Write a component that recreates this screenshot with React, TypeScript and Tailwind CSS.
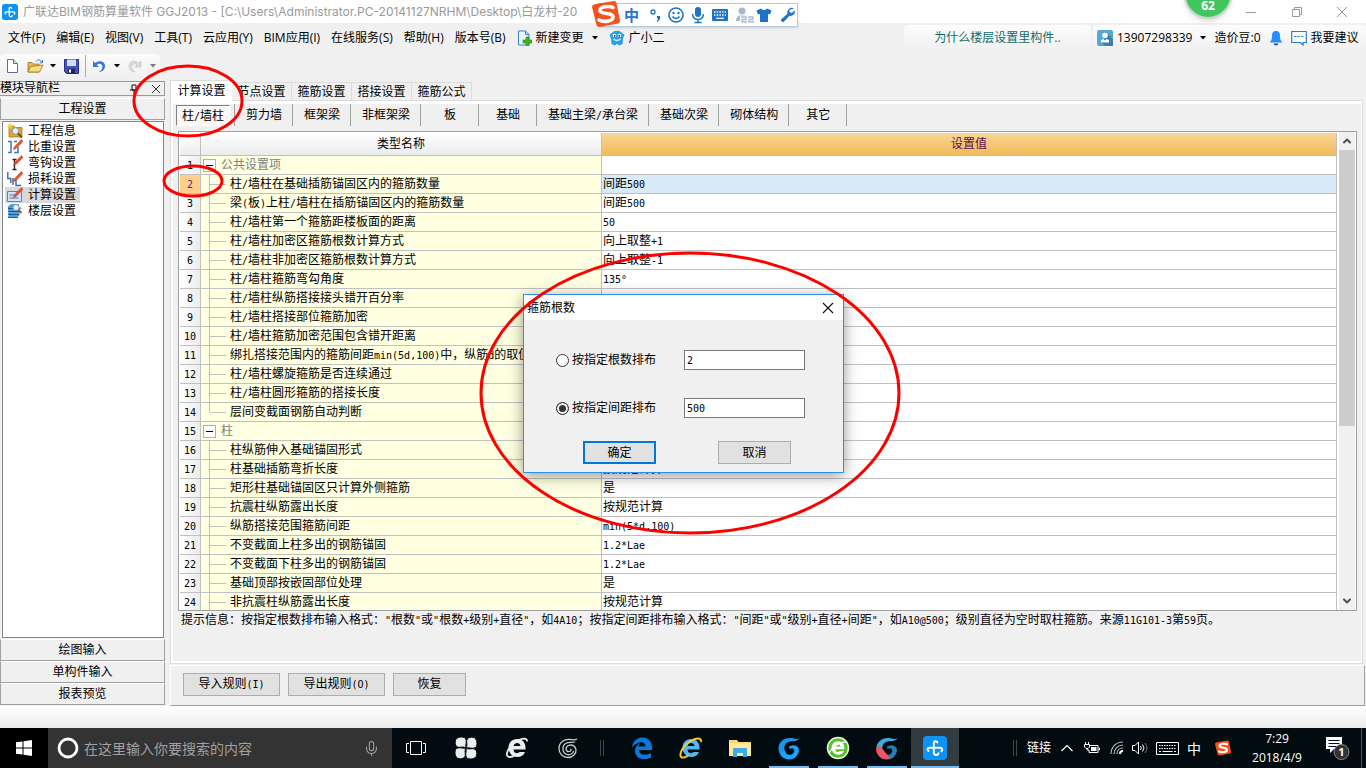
import React, { useState } from 'react';
import { clsx } from 'clsx';
import { ChevronUp, Mic } from 'lucide-react';

const SONG = "[font-family:'DejaVu_Sans_Mono','Noto_Sans_CJK_SC',monospace]";
const YAHEI = "[font-family:'Open_Sans','Noto_Sans_CJK_SC',sans-serif]";

const MENUS = ['文件(F)', '编辑(E)', '视图(V)', '工具(T)', '云应用(Y)', 'BIM应用(I)', '在线服务(S)', '帮助(H)', '版本号(B)'];
const TABS = ['计算设置', '节点设置', '箍筋设置', '搭接设置', '箍筋公式'];
const MEMBERS = ['剪力墙', '框架梁', '非框架梁', '板', '基础', '基础主梁/承台梁', '基础次梁', '砌体结构', '其它'];

interface Row {
  name: string;
  value?: string;
  group?: boolean;
  last?: boolean;
}

const ROWS: Row[] = [
  { name: '公共设置项', group: true },
  { name: '柱/墙柱在基础插筋锚固区内的箍筋数量', value: '间距500' },
  { name: '梁(板)上柱/墙柱在插筋锚固区内的箍筋数量', value: '间距500' },
  { name: '柱/墙柱第一个箍筋距楼板面的距离', value: '50' },
  { name: '柱/墙柱加密区箍筋根数计算方式', value: '向上取整+1' },
  { name: '柱/墙柱非加密区箍筋根数计算方式', value: '向上取整-1' },
  { name: '柱/墙柱箍筋弯勾角度', value: '135°' },
  { name: '柱/墙柱纵筋搭接接头错开百分率' },
  { name: '柱/墙柱搭接部位箍筋加密' },
  { name: '柱/墙柱箍筋加密范围包含错开距离' },
  { name: '绑扎搭接范围内的箍筋间距min(5d,100)中，纵筋d的取值' },
  { name: '柱/墙柱螺旋箍筋是否连续通过' },
  { name: '柱/墙柱圆形箍筋的搭接长度' },
  { name: '层间变截面钢筋自动判断', last: true },
  { name: '柱', group: true },
  { name: '柱纵筋伸入基础锚固形式' },
  { name: '柱基础插筋弯折长度', value: '按规范计算' },
  { name: '矩形柱基础锚固区只计算外侧箍筋', value: '是' },
  { name: '抗震柱纵筋露出长度', value: '按规范计算' },
  { name: '纵筋搭接范围箍筋间距', value: 'min(5*d,100)' },
  { name: '不变截面上柱多出的钢筋锚固', value: '1.2*Lae' },
  { name: '不变截面下柱多出的钢筋锚固', value: '1.2*Lae' },
  { name: '基础顶部按嵌固部位处理', value: '是' },
  { name: '非抗震柱纵筋露出长度', value: '按规范计算' },
];

const HINT =
  '提示信息：按指定根数排布输入格式："根数"或"根数+级别+直径"，如4A10；按指定间距排布输入格式："间距"或"级别+直径+间距"，如A10@500；级别直径为空时取柱箍筋。来源11G101-3第59页。';

// Half-width characters take half the width of a Chinese character
function Song({ text }: { text: string }) {
  return (
    <>
      {text.split(/([\x20-\x7e°]+)/).map((part, i) =>
        i % 2 ? (
          <span key={i} className="text-[10px]">{part}</span>
        ) : (
          part
        )
      )}
    </>
  );
}

function Caret({ className }: { className?: string }) {
  return (
    <svg viewBox="0 0 6 4" className={clsx('h-[4px] w-[6px] shrink-0', className)}>
      <path d="M0 0h6L3 3.5z" fill="currentColor" />
    </svg>
  );
}

function AppLogo({ className }: { className: string }) {
  return (
    <svg viewBox="0 0 24 24" className={className}>
      <rect width="24" height="24" rx="4" fill="#0c93f5" />
      <g fill="none" stroke="#fff" strokeWidth="1.900" strokeLinecap="round" strokeLinejoin="round">
        <path d="M14.500 6.500C13.500 4.500 10.800 5 10.800 7v9.500c0 3 3.700 3.300 4.700.8" />
        <path d="M5.500 15C3.800 14 4.300 11.800 6.500 11.800h10.500c2.500 0 3 2.700 1.200 3.500" />
      </g>
    </svg>
  );
}

function SogouS({ className }: { className: string }) {
  return (
    <svg viewBox="0 0 28 28" className={className}>
      <path d="M4 4 22 1q2 0 2.500 2L28 21q0 2-2 2.500L8 27q-3 0-3.500-2L0 7q0-2.500 4-3z" fill="#f4511e" />
      <path
        d="M21 7.500C17 5.500 8 6.500 8 10.500c0 4.500 13 1.500 13 6.500 0 4.500-9.500 5.500-14 3"
        fill="none"
        stroke="#fff"
        strokeWidth="3.600"
        strokeLinecap="round"
      />
    </svg>
  );
}

function TitleBar() {
  return (
    <header className="flex h-[23px] shrink-0 items-center bg-white pl-[2px] text-[12px] text-[#999]">
      <AppLogo className="size-4 shrink-0" />
      <h1 className="ml-[5px] whitespace-nowrap [font-family:Inter,'Noto_Sans_CJK_SC',sans-serif]">
        广联达BIM钢筋算量软件 GGJ2013 - [C:\Users\Administrator.PC-20141127NRHM\Desktop\白龙村-20
      </h1>
      <div className="ml-auto flex">
        <button aria-label="最小化" className="flex w-[46px] justify-center">
          <svg viewBox="0 0 10 10" className="size-[10px]"><path d="M0 5.500h10" stroke="#999" /></svg>
        </button>
        <button aria-label="还原" className="flex w-[46px] justify-center">
          <svg viewBox="0 0 10 10" className="size-[10px]">
            <path d="M.5 2.500h7v7h-7zM2.500 2.500v-2h7v7h-2" fill="none" stroke="#999" />
          </svg>
        </button>
        <button aria-label="关闭" className="flex w-[46px] justify-center pr-[3px]">
          <svg viewBox="0 0 10 10" className="size-[10px]"><path d="m0 0 10 10M10 0 0 10" stroke="#999" /></svg>
        </button>
      </div>
    </header>
  );
}

function MenuBar() {
  return (
    <div className="flex h-[30px] shrink-0 items-center whitespace-nowrap text-[12px] leading-[16px]">
      <nav className="flex items-center gap-[11px] pl-2">
        {MENUS.map(m => (
          <button key={m}>{m}</button>
        ))}
        <button className="flex items-center gap-1">
          <svg viewBox="0 0 15 16" className="h-4 w-[15px]">
            <path d="M1.500 1h7l3.500 3.500V15H1.500z" fill="#e6f4fc" stroke="#3d83c0" />
            <path d="M8.500 1v3.500H12" fill="none" stroke="#3d83c0" />
            <path d="M9 7h3v3h3v3h-3v3H9v-3H6v-3h3z" fill="#3fb024" stroke="#2b8a16" strokeWidth=".6" />
          </svg>
          新建变更
          <Caret className="ml-1" />
        </button>
        <button className="flex items-center gap-1">
          <svg viewBox="0 0 16 16" className="size-4">
            <path d="M3 3c2-3 8-3 10 0l2.500 1.500L14 9l-.5 5-3 1.500L8 14l-2.500 1.500-3-1.500L2 9 .5 4.500z" fill="#2a9fe8" />
            <path d="M4.500 9q3.500 3 7 0" fill="none" stroke="#d9f0fd" strokeWidth="1.500" />
            <circle cx="5.500" cy="5.500" r="1.700" fill="#fff" />
            <circle cx="10.500" cy="5.500" r="1.700" fill="#fff" />
            <circle cx="5.700" cy="5.800" r=".9" fill="#123" />
            <circle cx="10.300" cy="5.800" r=".9" fill="#123" />
          </svg>
          广小二
        </button>
      </nav>
      <div className="ml-auto flex h-[26px] gap-[2px]">
        <a href="#help" className="flex w-[187px] items-center justify-center rounded-t bg-linear-to-b from-[#fcfcfc] to-[#f0f0f0] text-[#0f6c6c]">
          为什么楼层设置里构件..
        </a>
        <div className="flex w-[273px] items-center rounded-t bg-linear-to-b from-[#fcfcfc] to-[#f0f0f0] pl-1">
          <button className="flex items-center">
            <svg viewBox="0 0 16 16" className="mr-1 size-4">
              <rect width="16" height="16" rx="2" fill="#55a7d6" />
              <path d="m11 4 5 5v7H8l-4-4z" fill="#3a7fae" />
              <circle cx="8" cy="5.500" r="2.800" fill="#fff" />
              <path d="M4 12.500V10l2.500-1L8 10.500 9.500 9l2.500 1v2.500z" fill="#fff" />
            </svg>
            13907298339
            <Caret className="ml-2" />
          </button>
          <span className="ml-2">造价豆:0</span>
          <button aria-label="通知" className="ml-2">
            <svg viewBox="0 0 14 16" className="h-4 w-[14px]">
              <path d="M7 1c3 0 4 2 4 5 0 3 .5 4.500 2.500 6.500H.5C2.500 10.500 3 9 3 6c0-3 1-5 4-5z" fill="#2b8cff" />
              <path d="M4.500 13.500h5Q9 15.500 7 15.500t-2.500-2z" fill="#1d4f9c" />
            </svg>
          </button>
          <button className="ml-2 flex items-center gap-1">
            <svg viewBox="0 0 16 16" className="size-4">
              <path d="M.7 1.500h14.600v11H12V15l-2.500-2.500H.7z" fill="#fff" stroke="#2b7cd8" strokeWidth="1.200" />
              <path d="M3 6.500h10" stroke="#2b7cd8" strokeDasharray="2.500 1" />
            </svg>
            我要建议
          </button>
        </div>
      </div>
    </div>
  );
}

function Toolbar() {
  return (
    <div className="flex h-[27px] shrink-0 items-end pb-[2px]">
      <div className="flex h-[24px] w-[160px] items-center rounded bg-linear-to-b from-[#fcfcfc] to-[#f0f0f0] pl-[6px]">
        <button aria-label="新建">
          <svg viewBox="0 0 13 16" className="h-4 w-[13px]">
            <path d="M1.500 1.500h6l4 4v9h-10z" fill="#fff" stroke="#5b6f94" />
            <path d="M7.500 1.500v4h4" fill="#d5e0f0" stroke="#5b6f94" />
          </svg>
        </button>
        <button aria-label="打开" className="ml-2 flex items-center gap-[6px]">
          <svg viewBox="0 0 17 16" className="h-4 w-[17px]">
            <path d="M1 4.500h4l1.500 1.500H12v8H1z" fill="#e8b64c" stroke="#9a7420" strokeWidth=".8" />
            <path d="m3.500 8.500 12.500-1.500-3.500 7H1z" fill="#fbdc86" stroke="#9a7420" strokeWidth=".8" />
            <path d="M9 3.500C11 1 13.500 1.500 14.500 4M15.500 2v2.800h-2.700" fill="none" stroke="#3f6db0" />
          </svg>
          <Caret />
        </button>
        <button aria-label="保存" className="ml-2">
          <svg viewBox="0 0 15 15" className="size-[15px]">
            <path d="M.5.5h14v14h-12l-2-2z" fill="#4451c0" stroke="#2a318c" />
            <path d="M3 .5h9v6.500H3z" fill="#d4ddf8" />
            <path d="M4 9.500h7v5H4z" fill="#20265c" />
            <path d="M5 10.500h2v3H5z" fill="#fff" />
          </svg>
        </button>
        <div className="ml-[6px] h-[22px] w-px bg-[#aaa]" />
        <button aria-label="撤销" className="ml-[6px] flex items-center gap-2">
          <svg viewBox="0 0 14 14" className="size-[14px]">
            <path d="M1 2v6h6L4.800 6C7 4 10 4.500 10.300 7.500 10.500 10 9 11.500 7 13c4-.5 6-3 6-6C13 2 7 .8 3.300 4z" fill="#3c76d2" />
          </svg>
          <Caret />
        </button>
        <button aria-label="重做" disabled className="ml-2 flex items-center gap-2 text-[#777]">
          <svg viewBox="0 0 14 14" className="size-[14px] -scale-x-100">
            <path d="M1 2v6h6L4.800 6C7 4 10 4.500 10.300 7.500 10.500 10 9 11.500 7 13c4-.5 6-3 6-6C13 2 7 .8 3.300 4z" fill="#ddd" stroke="#bbb" strokeWidth=".6" />
          </svg>
          <Caret />
        </button>
      </div>
    </div>
  );
}

const PENCIL = <path d="m14.500.5 1.500 2-7 7-2.500 1 .8-2.600z" fill="#f0502c" stroke="#b8300f" strokeWidth=".5" />;

const NAV_ITEMS = [
  {
    label: '工程信息',
    icon: (
      <>
        <path d="M2 3h5l1 1.500h7V14H2z" fill="#e3a72f" stroke="#9c6a14" strokeWidth=".7" />
        <path d="M3 0v6M0 3h6M1 1l4 4M5 1 1 5" stroke="#f7cf3a" />
        <circle cx="8.500" cy="8" r="3.300" fill="#e4f1fb" stroke="#8797a8" />
        <path d="m11 10.500 4 4" stroke="#6a4a20" strokeWidth="1.800" />
      </>
    ),
  },
  {
    label: '比重设置',
    icon: (
      <>
        <path d="M1 2.500h3v11H1M7 2.500h3M7 13.500h4V8" fill="none" stroke="#3c78bb" strokeWidth="1.500" />
        {PENCIL}
      </>
    ),
  },
  {
    label: '弯钩设置',
    icon: (
      <>
        <path d="M5.500 4.500h4M7.500 4.500v10M5.500 14.500h4" stroke="#222" strokeWidth="1.300" />
        {PENCIL}
      </>
    ),
  },
  {
    label: '损耗设置',
    icon: (
      <>
        <path d="M.8 1v6.500h3V12M6 7v7M9 9v5.500h5" fill="none" stroke="#3c68a8" strokeWidth="1.400" />
        {PENCIL}
      </>
    ),
  },
  {
    label: '计算设置',
    icon: (
      <>
        <path d="M.5 4.500h14v10H.5z" fill="#cfe3f8" stroke="#5585bd" />
        <path d="M2.500 8h5M2.500 11h9" stroke="#3f7ac0" />
        {PENCIL}
      </>
    ),
  },
  {
    label: '楼层设置',
    icon: (
      <>
        <path d="M1 3.500 4 1h8v3l3 1-3 2.500 2 1-2 2 1 1-2.500 2.500H1l1-2.500-1-1 1-2-1-1z" fill="#4f9ede" />
        <path d="M1 5.500h9M1 8.500h11M1 11.500h11M1 14.500h10" stroke="#1d5a9c" />
        <circle cx="9" cy="4.500" r="3" fill="#edf5fb" stroke="#8797a8" />
        <path d="m11.500 7 3 3" stroke="#8a5a20" strokeWidth="1.800" />
      </>
    ),
  },
];

function SideButton({ children }: { children: React.ReactNode }) {
  return (
    <button className="h-[22px] w-full shrink-0 border-x border-t border-b border-t-white border-r-[#a0a0a0] border-b-[#a0a0a0] border-l-[#a0a0a0] bg-[#f0f0f0]">
      {children}
    </button>
  );
}

function Sidebar() {
  const [active, setActive] = useState('计算设置');

  return (
    <aside className="flex w-[165px] shrink-0 flex-col pt-px">
      <div className="mb-[2px] flex h-[15px] shrink-0 items-center border border-l-0 border-[#999] leading-[13px]">
        模块导航栏
        <button aria-label="固定" className="mr-[14px] ml-auto">
          <svg viewBox="0 0 8 10" className="h-[10px] w-2"><path d="M2 1h4v5H2zM0 6h8M4 6v4" fill="none" stroke="#111" /></svg>
        </button>
        <button aria-label="关闭面板" className="mr-1">
          <svg viewBox="0 0 8 8" className="size-2"><path d="m0 0 8 8M8 0 0 8" stroke="#333" /></svg>
        </button>
      </div>
      <SideButton>工程设置</SideButton>
      <ul className="mt-px ml-[2px] mr-px min-h-0 flex-1 border border-[#828790] bg-white p-px">
        {NAV_ITEMS.map(item => (
          <li key={item.label} className="flex h-4 items-center">
            <button
              onClick={() => setActive(item.label)}
              className={clsx('ml-px flex h-4 items-center gap-[5px] pr-1 pl-[2px]', active === item.label && 'bg-[#d9d9d9]')}
            >
              <svg viewBox="0 0 16 16" className="size-4">{item.icon}</svg>
              {item.label}
            </button>
          </li>
        ))}
      </ul>
      <div className="mt-px flex flex-col pb-px">
        <SideButton>绘图输入</SideButton>
        <SideButton>单构件输入</SideButton>
        <SideButton>报表预览</SideButton>
      </div>
    </aside>
  );
}

function NameCell({ row }: { row: Row }) {
  if (row.group) {
    return (
      <div className="flex h-[18px] items-center text-[#808080]">
        <button aria-label="折叠" className="mr-[5px] ml-[2px] flex size-[13px] items-center justify-center border border-[#b0b0b0] bg-white">
          <span className="h-px w-[7px] bg-black" />
        </button>
        {row.name}
      </div>
    );
  }
  return (
    <div className="flex h-[18px] items-center">
      <span className={clsx('ml-2 w-px shrink-0 bg-[#c0c0c0]', row.last ? 'h-[9px] self-start' : 'h-[19px] self-start')} />
      <span className="mr-1 h-px w-4 shrink-0 bg-[#c0c0c0]" />
      <span className="h-[18px] overflow-hidden"><Song text={row.name} /></span>
    </div>
  );
}

function SettingsTable() {
  const [selected, setSelected] = useState(1);

  return (
    <div className="mt-[3px] mr-1 ml-[5px] flex min-h-0 flex-1 overflow-hidden border border-[#a0a0a0] bg-white">
      <div className="min-w-0 flex-1 overflow-hidden pt-px pl-px">
        <table className="w-full table-fixed border-separate border-spacing-0 whitespace-nowrap leading-[18px]">
          <colgroup>
            <col className="w-[21px]" />
            <col className="w-[401px]" />
            <col />
          </colgroup>
          <thead>
            <tr className="h-[23px]">
              <th className="border-r border-b border-[#c0c0c0] bg-linear-to-b from-white to-[#ececec] p-0" />
              <th className="border-r border-b border-[#c0c0c0] bg-linear-to-b from-white to-[#ececec] p-0 font-normal">类型名称</th>
              <th className="border-r border-b border-[#c0c0c0] bg-linear-to-b from-[#fad696] to-[#efba58] p-0 font-normal text-[#5a0f4a]">设置值</th>
            </tr>
          </thead>
          <tbody>
            {ROWS.map((row, i) => (
              <tr key={i} className="h-[19px]" onClick={() => setSelected(i)}>
                <td
                  className={clsx(
                    'border-r border-b border-[#c0c0c0] p-0 text-center',
                    i === selected ? 'bg-[#ffd08a] text-[#6b1580]' : 'bg-linear-to-r from-white to-[#ececec]'
                  )}
                >
                  <div className="h-[18px]"><Song text={String(i + 1)} /></div>
                </td>
                <td className="border-r border-b border-[#c0c0c0] bg-[#ffffe1] p-0">
                  <NameCell row={row} />
                </td>
                <td className={clsx('border-r border-b border-[#c0c0c0] p-0 pl-px', i === selected && 'bg-[#d8e9f8]')}>
                  <div className="h-[18px]"><Song text={row.value ?? ''} /></div>
                </td>
              </tr>
            ))}
          </tbody>
        </table>
      </div>
      <div className="flex w-[19px] shrink-0 flex-col pr-px pl-[2px] text-[#505050]">
        <button aria-label="向上滚动" className="flex h-[18px] items-center justify-center bg-[#f0f0f0]">
          <ChevronUp className="size-3" strokeWidth={4} />
        </button>
        <div className="flex-1 bg-[#f0f0f0]">
          <div className="h-5/8 bg-[#cdcdcd]" />
        </div>
        <button aria-label="向下滚动" className="flex h-[18px] items-center justify-center bg-[#f0f0f0]">
          <ChevronUp className="size-3 rotate-180" strokeWidth={4} />
        </button>
      </div>
    </div>
  );
}

function Workspace() {
  return (
    <main className="flex min-w-0 flex-1 flex-col pr-px">
      <div role="tablist" className="flex h-5 shrink-0 items-end">
        {TABS.map((tab, i) => (
          <button
            key={tab}
            role="tab"
            aria-selected={i === 0}
            className={clsx(
              'border-[#dcdcdc]',
              i === 0 ? 'relative -mb-px h-[21px] w-[62px] border-t border-l bg-white' : 'h-[18px] w-[60px] border-t border-r bg-[#f0f0f0]'
            )}
          >
            {tab}
          </button>
        ))}
      </div>
      <section className="mr-[2px] flex min-h-0 flex-1 flex-col border border-[#dcdcdc] bg-white pt-[3px] pr-px pb-[2px] pl-[2px]">
        <div className="flex min-h-0 flex-1 flex-col bg-[#f0f0f0]">
          <div className="flex h-6 shrink-0 items-start whitespace-nowrap pl-[3px]">
            <button className="mt-px h-[21px] w-[54px] border border-t-[#808080] border-r-white border-b-white border-l-[#808080] bg-[#f8f8f8]">
              <Song text="柱/墙柱" />
            </button>
            <span className="h-[22px] w-[5px] border-r border-[#a0a0a0]" />
            {MEMBERS.map(m => (
              <button key={m} className="h-[22px] min-w-[58px] border-r border-[#a0a0a0] pr-[10px] pl-[11px]">
                <Song text={m} />
              </button>
            ))}
          </div>
          <SettingsTable />
          <p className="h-[50px] shrink-0 overflow-hidden pl-2 leading-[18px] whitespace-nowrap">
            <Song text={HINT} />
          </p>
        </div>
      </section>
      <div className="mt-px flex h-[41px] shrink-0 items-center gap-2 border border-t-white border-r-[#a0a0a0] border-b-[#a0a0a0] border-l-white pb-[3px] pl-3">
        <button className="h-[23px] w-[97px] border border-[#adadad] bg-[#e1e1e1]"><Song text="导入规则(I)" /></button>
        <button className="h-[23px] w-[97px] border border-[#adadad] bg-[#e1e1e1]"><Song text="导出规则(O)" /></button>
        <button className="h-[23px] w-[73px] border border-[#adadad] bg-[#e1e1e1]">恢复</button>
      </div>
    </main>
  );
}

function StirrupDialog() {
  const [mode, setMode] = useState('spacing');
  const radio =
    'mr-[3px] size-[13px] appearance-none rounded-full border border-[#333] bg-white checked:bg-[#333] checked:shadow-[inset_0_0_0_2px_white]';
  const field = 'ml-auto h-5 w-[121px] border border-[#7a7a7a] bg-white px-[2px] text-[10px] leading-[16px]';

  return (
    <div
      role="dialog"
      aria-label="箍筋根数"
      className="absolute top-[294px] left-[523px] w-[321px] border border-[#2e8def] bg-[#f0f0f0] shadow-[0_3px_14px_rgba(0,0,0,0.4)]"
    >
      <div className="flex h-[25px] items-center bg-white pr-[9px] pl-[3px]">
        <span className={YAHEI}>箍筋根数</span>
        <button aria-label="关闭" className="ml-auto">
          <svg viewBox="0 0 12 12" className="size-3"><path d="m1 1 10 10M11 1 1 11" stroke="#111" strokeWidth="1.100" /></svg>
        </button>
      </div>
      <div className="flex flex-col gap-7 pt-[30px] pr-[38px] pl-8">
        <div className="flex h-5 items-center">
          <input type="radio" id="byCount" name="mode" className={radio} checked={mode === 'count'} onChange={() => setMode('count')} />
          <label htmlFor="byCount">按指定根数排布</label>
          <input aria-label="根数" className={field} defaultValue="2" />
        </div>
        <div className="flex h-5 items-center">
          <input type="radio" id="bySpacing" name="mode" className={radio} checked={mode === 'spacing'} onChange={() => setMode('spacing')} />
          <label htmlFor="bySpacing">按指定间距排布</label>
          <input aria-label="间距" className={field} defaultValue="500" />
        </div>
      </div>
      <div className="flex justify-between pt-[23px] pr-[52px] pb-2 pl-[59px]">
        <button className="h-[23px] w-[73px] border-2 border-[#0078d7] bg-[#e1e1e1]">确定</button>
        <button className="h-[23px] w-[73px] border border-[#adadad] bg-[#e1e1e1]">取消</button>
      </div>
    </div>
  );
}

function ImeBar() {
  return (
    <div className="absolute top-[3px] left-[598px] flex h-[24px] w-[200px] items-center border border-[#b5c8dc] bg-white pl-[25px] text-[#1e73c8] shadow-sm">
      <SogouS className="absolute -top-[4px] -left-[7px] size-7" />
      <span className="w-[22px] text-[15px] leading-[20px] font-bold">中</span>
      <svg viewBox="0 0 176 22" className="h-[22px] w-[154px]" fill="currentColor" preserveAspectRatio="xMinYMid slice">
        <circle cx="7" cy="8" r="2" fill="none" stroke="currentColor" strokeWidth="1.300" />
        <path d="M11 12h3q1 3-2.500 6l-.8-.8q1.500-1.400 1.300-2.600h-1z" />
        <g fill="none" stroke="currentColor" strokeWidth="1.600">
          <circle cx="30" cy="11" r="7" />
          <path d="M26.500 12.500q3.500 4 7 0" />
        </g>
        <circle cx="27.500" cy="9" r="1.200" /><circle cx="32.500" cy="9" r="1.200" />
        <rect x="49" y="3" width="6" height="10" rx="3" />
        <path d="M46.500 10q.5 5.500 5.500 5.500t5.500-5.500M52 15v4M48.500 18.500h7" fill="none" stroke="currentColor" strokeWidth="1.500" />
        <rect x="66" y="5" width="16" height="12" rx="1" />
        <path d="M68 8h12M68 11h12" stroke="#fff" strokeWidth="1.500" strokeDasharray="1.500 1.200" />
        <path d="M70 14.300h8" stroke="#fff" strokeWidth="1.200" />
        <g fill="#a9b9cc"><circle cx="96" cy="7" r="3.500" /><path d="M90 17q0-6 6-6t6 3v3z" /></g>
        <path d="M94 11.500h14v8H94z" fill="#fff" />
        <path d="M95 13h5v2.500h-4V18h5M102 13h5v2.500h-4V18h5" fill="none" stroke="#a9b9cc" strokeWidth="1.300" />
        <path d="M115 4.500q3 3 6 0l4.500 2-1.500 4-2-.5v8h-8v-8l-2 .5-1.500-4z" />
        <path d="M148 4.500a4.500 4.500 0 0 0-6.500 5.300L134.500 16l2.500 2.500 6.500-6.700a4.500 4.500 0 0 0 5.300-5.500L146 9l-2.300-.7-.5-2.300z" />
      </svg>
    </div>
  );
}

function Swirl({ top, bottom }: { top: string; bottom: string }) {
  return (
    <>
      <path d="M22.500 2c-2 1.200-3.500 1-6 .5C8 .5 1 6 1.500 13c.2 3 1.500 5.500 3.500 7.500L9 17c-3-4-2-10 3.500-11.500 4-1 8 .5 10-3.500z" fill={top} />
      <path d="M12 10.500q7-3 9.500 1.500c2 5-3 12-10 11.500-3.500-.3-6.500-2-8-4.500l3.500-5c1.500 4.500 5.500 6 8.500 4 2-1.500 2.500-4.500.5-5.500-1.200-.7-2.500-.3-3.500.5z" fill={bottom} />
    </>
  );
}

function BrowserE({ color }: { color: string }) {
  return (
    <path
      d="M12 3c-5 0-8.500 3.800-8.500 8.800S7 21 12.300 21c3.700 0 6.500-1.800 7.700-5h-5.500c-2 2.400-6 1.300-6-2.500h12c.6-6.500-3-10.500-8.500-10.500zM8.600 10c.6-4 6.400-4 6.900 0z"
      fill={color}
    />
  );
}

const PINNED = [
  {
    label: '风车',
    running: false,
    icon: (
      <g fill="#e9eeee" stroke="#020b0f">
        {[0, 90, 180, 270].map(a => (
          <path key={a} d="M12 12C11 9 13.500 5.500 11.500 2.500 9.500 0 2 .5 1.300 5c-.6 4.500 1.500 6.300 4.200 6.300C8 11.300 9.500 10.500 12 12z" transform={`rotate(${a} 12 12)`} />
        ))}
      </g>
    ),
  },
  {
    label: '浏览器',
    running: false,
    icon: (
      <>
        <BrowserE color="#e9eeee" />
        <path d="M22 5.500C22.500 0 12 3 5 11c-4 5-4.500 10 0 10 2 0 3.500-.8 5-2" fill="none" stroke="#e9eeee" strokeWidth="1.800" />
      </>
    ),
  },
  {
    label: '广联达',
    running: false,
    icon: (
      <g fill="none" stroke="#c9cfd0" strokeWidth="1.300">
        <path d="M21 3c-2 1.300-4 .8-6.500.5C8 2.500 3 7 3 12.500S7 21.500 12 21.500s8.500-4 8-8c-.5-3.500-4-5.500-7.500-4-3.500 1.500-3 6 .3 6.200 2.200 0 2.700-2 1.700-2.900" />
        <path d="M19 6c-3 1-6-.5-9 1.300-4.500 2.700-4 10 1.500 11.300 3 .6 5.500-1 6-3.600" />
      </g>
    ),
  },
];

const RUNNING = [
  {
    label: 'Edge',
    running: false,
    icon: (
      <path
        d="M2 11.500C3 4 8 1.500 12.500 1.500c6 0 9.500 4.500 9.500 9.500v3H9c.3 5.500 7.500 6 12 3v4.500c-8 4-16 .5-16-6.500 0-4 2.500-6.500 5-7.500-1 1.200-1.300 2-1.500 3h7c0-5.500-7.500-6-13.500 1z"
        fill="#0a78d7"
      />
    ),
  },
  {
    label: 'Internet Explorer',
    running: false,
    icon: (
      <>
        <BrowserE color="#53b7f0" />
        <path d="M22 6C23-1 11 3 4.500 11.500c-4 5.500-4.500 11 .5 10 1.700-.4 3-1.200 4.500-2.500" fill="none" stroke="#f5c92c" strokeWidth="2" />
      </>
    ),
  },
  {
    label: '文件资源管理器',
    running: false,
    icon: (
      <>
        <path d="M1 4h8l1.500 2H23v14H1z" fill="#f8d775" />
        <path d="M1 7h22v13H1z" fill="#ffe79b" />
        <path d="M5 21v-8q0-1 1-1h12q1 0 1 1v8h-4v-4H9v4z" fill="#39aee6" />
      </>
    ),
  },
  { label: '广联达G+', running: true, icon: <Swirl top="#1696ee" bottom="#1ba4ff" /> },
  {
    label: '360浏览器',
    running: true,
    icon: (
      <>
        <circle cx="12" cy="12" r="10.500" fill="#57c22d" stroke="#e3f6d6" strokeWidth="1.500" />
        <g transform="translate(3 3) scale(.75)"><BrowserE color="#fff" /></g>
        <path d="M3 17C7 10 15 5 21 6" fill="none" stroke="#fff" strokeWidth="1.300" />
      </>
    ),
  },
  {
    label: '广联达服务',
    running: true,
    icon: (
      <>
        <Swirl top="#3eaadb" bottom="#287fb5" />
        <path d="m1 12 4-2 10 12c-7 4-14-2-14-10z" fill="#ef5465" />
      </>
    ),
  },
];

function TaskIcon({ label, running, icon }: { label: string; running: boolean; icon: React.ReactNode }) {
  return (
    <button aria-label={label} className={clsx('flex h-10 w-10 items-center justify-center border-y-2 border-t-transparent', running ? 'border-b-[#76b9ed]' : 'border-b-transparent')}>
      <svg viewBox="0 0 24 24" className="size-6">{icon}</svg>
    </button>
  );
}

function Taskbar() {
  return (
    <footer className="flex h-10 shrink-0 items-center bg-[#020b0f] text-white">
      <button aria-label="开始" className="flex h-10 w-12 items-center justify-center bg-black">
        <svg viewBox="0 0 16 16" className="size-4">
          <path d="m0 2.300 6.500-.9v6.100H0zM7.500 1.200 16 0v7.500H7.500zM0 8.500h6.500v6.100L0 13.700zM7.500 8.500H16V16l-8.500-1.200z" fill="#fff" />
        </svg>
      </button>
      <label className="flex h-10 w-[344px] shrink-0 items-center bg-[#333] px-[9px]">
        <svg viewBox="0 0 22 22" className="mr-[5px] size-[22px] shrink-0">
          <circle cx="11" cy="11" r="9" fill="none" stroke="#fff" strokeWidth="2.800" />
        </svg>
        <input
          aria-label="搜索"
          placeholder="在这里输入你要搜索的内容"
          className="min-w-0 flex-1 text-[14px] placeholder:text-[#a0a0a0]"
        />
        <Mic className="mr-[3px] size-[17px] text-[#a0a0a0]" strokeWidth={1.5} />
      </label>
      <button aria-label="任务视图" className="flex h-10 w-12 items-center justify-center">
        <svg viewBox="0 0 20 16" className="h-4 w-5">
          <path d="M4.500 1.500h11v13h-11zM3 3.500H.5v9H3M17 3.500h2.500v9H17" fill="none" stroke="#fff" />
        </svg>
      </button>
      <div className="flex gap-[11px] pl-[6px]">
        {PINNED.map(p => (
          <TaskIcon key={p.label} {...p} />
        ))}
      </div>
      <div className="mr-[18px] ml-3 h-4 w-[4px] border-x border-[#444]" />
      <div className="flex gap-[9px]">
        {RUNNING.map(p => (
          <TaskIcon key={p.label} {...p} />
        ))}
      </div>
      <button aria-label="GGJ2013" className="ml-[4px] flex h-10 w-12 items-center justify-center border-y-2 border-t-[#323c3f] border-b-[#76b9ed] bg-[#323c3f]">
        <AppLogo className="size-6" />
      </button>
      <div className="ml-auto flex h-10 items-center">
        <div className="mr-[10px] h-4 w-[4px] border-x border-[#444]" />
        <span className="text-[12px]">链接</span>
        <button aria-label="显示隐藏的图标" className="ml-[10px]">
          <svg viewBox="0 0 12 8" className="h-2 w-3"><path d="m.5 7 5.500-5.500L11.500 7" fill="none" stroke="#fff" strokeWidth="1.200" /></svg>
        </button>
        <svg viewBox="0 0 16 12" className="ml-[11px] h-3 w-4" fill="none" stroke="#fff">
          <path d="M5.500 3.500h8.500v7H5V8M14.500 6h1v2h-1M1.500 0v2M4.500 0v2M.5 2.500h5V5L4 6.500H2L.5 5zM3 6.500V8h2" />
          <path d="M7 5h5.500v4H7z" fill="#fff" stroke="none" />
        </svg>
        <svg viewBox="0 0 14 14" className="ml-[10px] size-[14px]" fill="none" stroke="#fff" strokeWidth="1.200">
          <path d="M1 13C1 6 6 1 13 1M4 13c0-5 4-9 9-9M7 13c0-3.500 2.500-6 6-6" stroke="#bbb" />
          <path d="M10 13c0-2 1-3 3-3" strokeWidth="2" />
        </svg>
        <svg viewBox="0 0 16 14" className="ml-2 h-[14px] w-4" fill="none" stroke="#fff">
          <path d="M.5 4.500H3L6.500 1v12L3 9.500H.5zM8.500 5q1.500 2 0 4M10.500 3.500q3 3.500 0 7" />
          <path d="M13 2q4 5 0 10" stroke="#777" />
        </svg>
        <svg viewBox="0 0 23 13" className="ml-2 h-[13px] w-[23px]" fill="none" stroke="#fff">
          <path d="M.5.5h22v12H.5z" />
          <path d="M3 3.500h17M3 6.500h17" strokeDasharray="1.500 1" />
          <path d="M3 9.500h2M6.500 9.500h10M18 9.500h2" />
        </svg>
        <span className="ml-2 text-[14px]">中</span>
        <SogouS className="ml-[14px] size-4" />
        <div className="ml-[19px] w-[54px] text-center text-[12px] leading-[19px]">
          <div>7:29</div>
          <div>2018/4/9</div>
        </div>
        <button aria-label="操作中心" className="relative ml-[22px]">
          <svg viewBox="0 0 24 24" className="size-6">
            <path d="M0 1h16v12H8l-4 4v-4H0z" fill="#fff" />
            <path d="M2.500 4.500h11M2.500 7.500h11M2.500 10.500h8" stroke="#020b0f" />
            <circle cx="15.500" cy="16" r="7.500" fill="#333" stroke="#888" />
          </svg>
          <span className="absolute right-0 bottom-0 w-[17px] text-center text-[11px] leading-[16px] font-bold">1</span>
        </button>
        <div className="ml-[11px] mr-1 h-10 w-px bg-[#555]" />
      </div>
    </footer>
  );
}

export default function App() {
  return (
    <div className={clsx('relative flex h-screen flex-col overflow-hidden bg-[#f0f0f0] text-[12px] text-black', YAHEI)}>
      <TitleBar />
      <MenuBar />
      <Toolbar />
      <div className={clsx('flex min-h-0 flex-1 gap-[5px]', SONG)}>
        <Sidebar />
        <Workspace />
      </div>
      <div className="h-[22px] shrink-0 bg-linear-to-b from-white to-[#ebebeb]" />
      <Taskbar />

      <ImeBar />
      <div className="absolute -top-[29px] left-[1184px] flex size-12 items-end justify-center rounded-full border-2 border-[#c9d6cc] bg-[#3fc65c] pb-[3px] text-[12px] leading-[16px] font-bold text-white shadow-md">
        62
      </div>
      <div className={SONG}>
        <StirrupDialog />
      </div>

      {/* Red pen marks */}
      <svg className="pointer-events-none absolute inset-0 h-full w-full" fill="none" stroke="#fe0000" strokeWidth="3">
        <ellipse cx="188" cy="101" rx="54" ry="35" />
        <ellipse cx="193" cy="181" rx="29" ry="15" />
        <ellipse cx="690" cy="393" rx="209" ry="140" />
      </svg>
    </div>
  );
}
